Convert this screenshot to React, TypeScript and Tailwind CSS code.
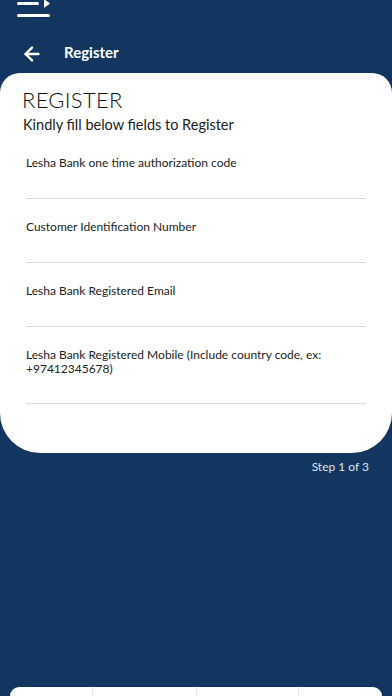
import { ArrowLeft } from "lucide-react";

const fields = [
  "Lesha Bank one time authorization code",
  "Customer Identification Number",
  "Lesha Bank Registered Email",
  "Lesha Bank Registered Mobile (Include country code, ex: +97412345678)",
];

const MenuIcon = () => (
  <svg width="36" height="20" viewBox="0 0 36 20" className="block">
    <rect x="0" y="2" width="22" height="3" rx="1.5" fill="white" />
    <polygon points="27,-1 33,3.5 27,8" fill="white" />
    <rect x="0" y="14" width="33" height="3" rx="1.5" fill="white" />
  </svg>
);

const App = () => {
  return (
    <div
      className="w-[392px] h-[696px] bg-[#133661] flex flex-col overflow-hidden"
      style={{ fontFamily: 'Lato, "Noto Sans", sans-serif' }}
    >
      {/* top menu */}
      <div className="h-[20px] pl-[17px]">
        <MenuIcon />
      </div>

      {/* header */}
      <div className="h-[53px] flex items-center pl-[21px] pt-[15px]">
        <ArrowLeft className="w-[22px] h-[22px] text-white" strokeWidth={2.6} />
        <span className="ml-[21px] -mt-[3px] text-white text-[15px] font-bold">Register</span>
      </div>

      {/* form card */}
      <div className="bg-white rounded-t-[20px] rounded-b-[40px] h-[380px] pt-[13px]">
        <h1 className="pl-[22px] text-[22px] leading-[27px] text-[#111] font-light tracking-[0.3px]">
          REGISTER
        </h1>
        <p className="pl-[23px] text-[14.5px] leading-[20px] text-[#222] mt-[2px]">
          Kindly fill below fields to Register
        </p>
        <div className="px-[26px]">
          {fields.map((f, i) => (
            <div
              key={f}
              className={
                "border-b border-[#dcdcdc] pt-[21px] " + (i === 3 ? "h-[77px]" : "h-[64px]")
              }
            >
              <div className="text-[12px] leading-[14px] text-[#222] pr-[20px]">{f}</div>
            </div>
          ))}
        </div>
      </div>

      <div className="text-right pr-[23px] mt-[5px] text-[12px] text-[#dfe4ea]">Step 1 of 3</div>

      <div className="flex-1" />

      {/* bottom tab bar */}
      <div className="mx-[10px] h-[9px] bg-white rounded-t-[20px] flex">
        <div className="w-[83px] border-r border-[#e5e5e5]" />
        <div className="w-[104px] border-r border-[#e5e5e5]" />
        <div className="w-[102px] border-r border-[#e5e5e5]" />
        <div className="flex-1" />
      </div>
    </div>
  );
};

export default App;
